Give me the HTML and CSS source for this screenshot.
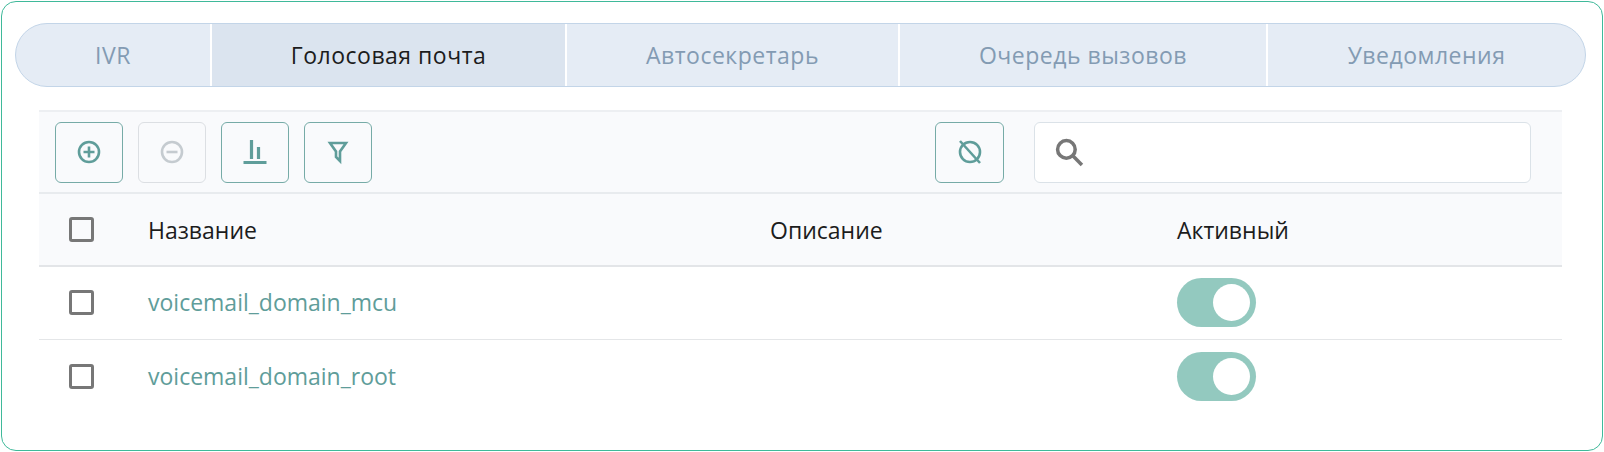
FILE: index.html
```html
<!DOCTYPE html>
<html lang="ru">
<head>
<meta charset="utf-8">
<title>Голосовая почта</title>
<link rel="stylesheet" href="styles.css">
</head>
<body>
<div class="card">
  <nav class="tabs">
    <a class="tab tab-ivr">IVR</a>
    <a class="tab tab-voicemail active">Голосовая почта</a>
    <a class="tab tab-attendant">Автосекретарь</a>
    <a class="tab tab-queue">Очередь вызовов</a>
    <a class="tab tab-notify">Уведомления</a>
  </nav>
  <section class="table">
    <div class="toolbar">
      <div class="btn-group">
        <button class="btn">
          <svg class="icon" viewBox="0 0 24 24"><circle cx="12" cy="12" r="10"/><path d="M12 6.5v11M6.5 12h11"/></svg>
        </button>
        <button class="btn disabled">
          <svg class="icon" viewBox="0 0 24 24"><circle cx="12" cy="12" r="10"/><path d="M6.5 12h11"/></svg>
        </button>
        <button class="btn">
          <svg class="icon bars" viewBox="0 0 24 24"><path d="M0.5 22.5h23M8.5 0v19M15.5 7v12"/></svg>
        </button>
        <button class="btn">
          <svg class="icon" viewBox="0 0 24 24"><path d="M4 3h16l-6 8.5v9.5l-4-4v-5.5z"/></svg>
        </button>
      </div>
      <button class="btn clear">
        <svg class="icon" viewBox="0 0 24 24"><circle cx="12" cy="12" r="10"/><path d="M2 1l20 22"/></svg>
      </button>
      <div class="search">
        <svg class="search-icon" viewBox="0 0 28 28"><circle cx="11" cy="11" r="8.5"/><path d="M17 17l9 9"/></svg>
      </div>
    </div>
    <div class="row head">
      <span class="check"></span>
      <span>Название</span>
      <span>Описание</span>
      <span>Активный</span>
    </div>
    <div class="row first">
      <span class="check"></span>
      <a class="link">voicemail_domain_mcu</a>
      <span></span>
      <span class="switch"></span>
    </div>
    <div class="row last">
      <span class="check"></span>
      <a class="link">voicemail_domain_root</a>
      <span></span>
      <span class="switch"></span>
    </div>
  </section>
</div>
</body>
</html>
```

FILE: styles.css
```css
* { box-sizing: border-box; }
html, body { margin: 0; height: 100%; background: #fff; }
body { padding: 1px; font-family: "Open Sans", "Noto Sans", sans-serif; font-size: 23px; color: #1c1c1c; }
.card {
  width: 1602px; height: 450px;
  border: 1px solid #3fb99a; border-radius: 15px;
  background: #fff;
  padding: 21px 16px 0 13px;
}
.tabs {
  display: flex; height: 64px;
  background: #e5ecf5;
  border: 1px solid #c3d5e8;
  border-radius: 32px;
  overflow: hidden;
}
.tab {
  display: flex; align-items: center; justify-content: center;
  color: #839bb3; font-weight: 500;
  border-right: 2px solid #fff;
  letter-spacing: 0.5px;
}
.tab.active { background: #dbe4ef; color: #1c1c1c; font-weight: 400; }
.tab-ivr { width: 196px; }
.tab-voicemail { width: 355px; }
.tab-attendant { width: 333px; }
.tab-queue { width: 368px; }
.tab-notify { flex: 1; border-right: 0; }

.table { margin: 23px 0 0 24px; width: 1523px; }
.toolbar {
  display: flex; align-items: center; gap: 15px;
  height: 84px; padding: 0 31px 0 16px;
  background: #f9fafc;
  border-top: 2px solid #edeff2;
  border-bottom: 2px solid #e8ebee;
}
.btn-group { display: flex; gap: 15px; margin-right: auto; }
.btn {
  display: flex; align-items: center; justify-content: center;
  width: 68px; height: 61px; padding: 0;
  background: transparent;
  border: 1px solid #76aba7; border-radius: 6px;
}
.btn.disabled { border-color: #dcdfe3; }
.btn.clear { width: 69px; margin-right: 15px; }
.icon { width: 24px; height: 24px; fill: none; stroke: #5f9d9a; stroke-width: 2.6; overflow: visible; }
.icon.bars { stroke-width: 3.2; }
.disabled .icon { stroke: #c5cbd0; }
.search {
  display: flex; align-items: center;
  width: 497px; height: 61px; padding-left: 20px;
  background: #fff;
  border: 1px solid #dbe2e8; border-radius: 6px;
}
.search-icon { width: 29px; height: 29px; fill: none; stroke: #777; stroke-width: 3.4; }

.row {
  display: grid; grid-template-columns: 79px 622px 407px 1fr;
  align-items: center;
  height: 73px; padding-left: 30px;
  border-bottom: 1px solid #e4e6e8;
}
.row.head { background: #f9fafc; border-bottom: 2px solid #e3e5e8; }
.row.first { padding-bottom: 1px; }
.row.last { border-bottom: 0; }
.check {
  display: block; width: 25px; height: 25px;
  border: 3px solid #777; border-radius: 3px;
}
.link { color: #5f9d9a; margin-bottom: 2px; }
.switch {
  position: relative; display: block;
  width: 79px; height: 49px; border-radius: 25px;
  background: #93c9bf;
}
.switch::after {
  content: ""; position: absolute; top: 6px; right: 6px;
  width: 37px; height: 37px; border-radius: 50%; background: #fff;
}
```
